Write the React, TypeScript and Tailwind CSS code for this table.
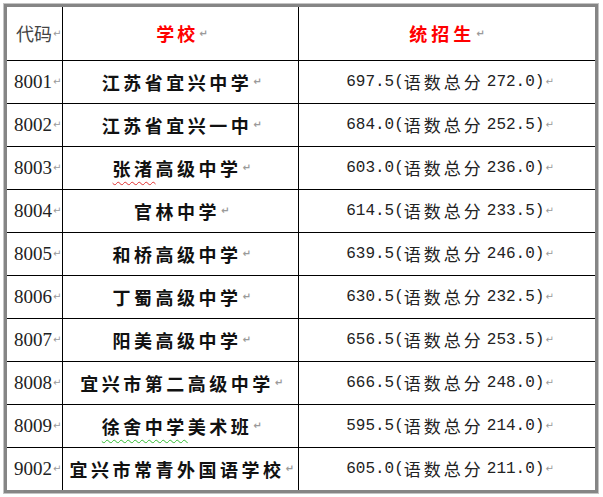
const rows = [
  { code: "8001", school: "江苏省宜兴中学", score: "697.5", sub: "272.0" },
  { code: "8002", school: "江苏省宜兴一中", score: "684.0", sub: "252.5" },
  { code: "8003", school: "张渚高级中学", score: "603.0", sub: "236.0", wavy: 2, wavyColor: "decoration-[#e03030]" },
  { code: "8004", school: "官林中学", score: "614.5", sub: "233.5" },
  { code: "8005", school: "和桥高级中学", score: "639.5", sub: "246.0" },
  { code: "8006", school: "丁蜀高级中学", score: "630.5", sub: "232.5" },
  { code: "8007", school: "阳美高级中学", score: "656.5", sub: "253.5" },
  { code: "8008", school: "宜兴市第二高级中学", score: "666.5", sub: "248.0" },
  { code: "8009", school: "徐舍中学美术班", score: "595.5", sub: "214.0", wavy: 4, wavyColor: "decoration-[#33bb33]" },
  { code: "9002", school: "宜兴市常青外国语学校", score: "605.0", sub: "211.0" },
];

// paragraph mark left after each cell, as in the word doc
function Mark() {
  return <span className="ml-[1px] font-['DejaVu_Sans',sans-serif] text-[10px] leading-none text-[#9a9a9a]">↵</span>;
}

function School({ name, wavy, wavyColor }: { name: string; wavy?: number; wavyColor?: string }) {
  if (!wavy) return <span>{name}</span>;
  return (
    <span>
      <span className={`underline decoration-wavy decoration-1 underline-offset-[5px] ${wavyColor}`}>
        {name.slice(0, wavy)}
      </span>
      {name.slice(wavy)}
    </span>
  );
}

export default function App() {
  return (
    <div className="h-[497px] w-[603px] bg-white pl-[3px] pt-[3px] font-['Noto_Sans_CJK_SC',sans-serif]">
      <div className="w-[596px] border border-[#c4c4c4]">
        <div className="border-[3px] border-[#858585]">
          <div className="grid h-[53px] grid-cols-[56px_236px_1fr]">
            <div className="flex items-center border-r border-black pl-[9px] text-[18px] text-[#444]">
              代码
              <Mark />
            </div>
            <div className="flex items-center justify-center border-r border-black pl-[6px] text-[18px] font-bold tracking-[3px] text-[#ff0000]">
              学校
              <Mark />
            </div>
            <div className="flex items-center justify-center pl-[4px] text-[18px] font-bold tracking-[4px] text-[#ff0000]">
              统招生
              <Mark />
            </div>
          </div>
          {rows.map((r) => (
            <div key={r.code} className="grid h-[43px] grid-cols-[56px_236px_1fr] border-t border-black">
              <div className="flex items-center border-r border-black pl-[7px] font-['Liberation_Serif',serif] text-[19px] text-[#222]">
                {r.code}
                <Mark />
              </div>
              <div className="flex items-center justify-center border-r border-black pl-[6px] text-[18px] font-bold tracking-[3.5px] text-[#111]">
                <School name={r.school} wavy={r.wavy} wavyColor={r.wavyColor} />
                <Mark />
              </div>
              <div className="flex items-center justify-center pl-[6px] text-[16px] text-[#222]">
                <span className="font-['Liberation_Mono',monospace]">{r.score}(</span>
                <span className="text-[17px] tracking-[3px]">语数总分</span>
                <span className="ml-[3px] font-['Liberation_Mono',monospace]">{r.sub})</span>
                <Mark />
              </div>
            </div>
          ))}
        </div>
      </div>
    </div>
  );
}
